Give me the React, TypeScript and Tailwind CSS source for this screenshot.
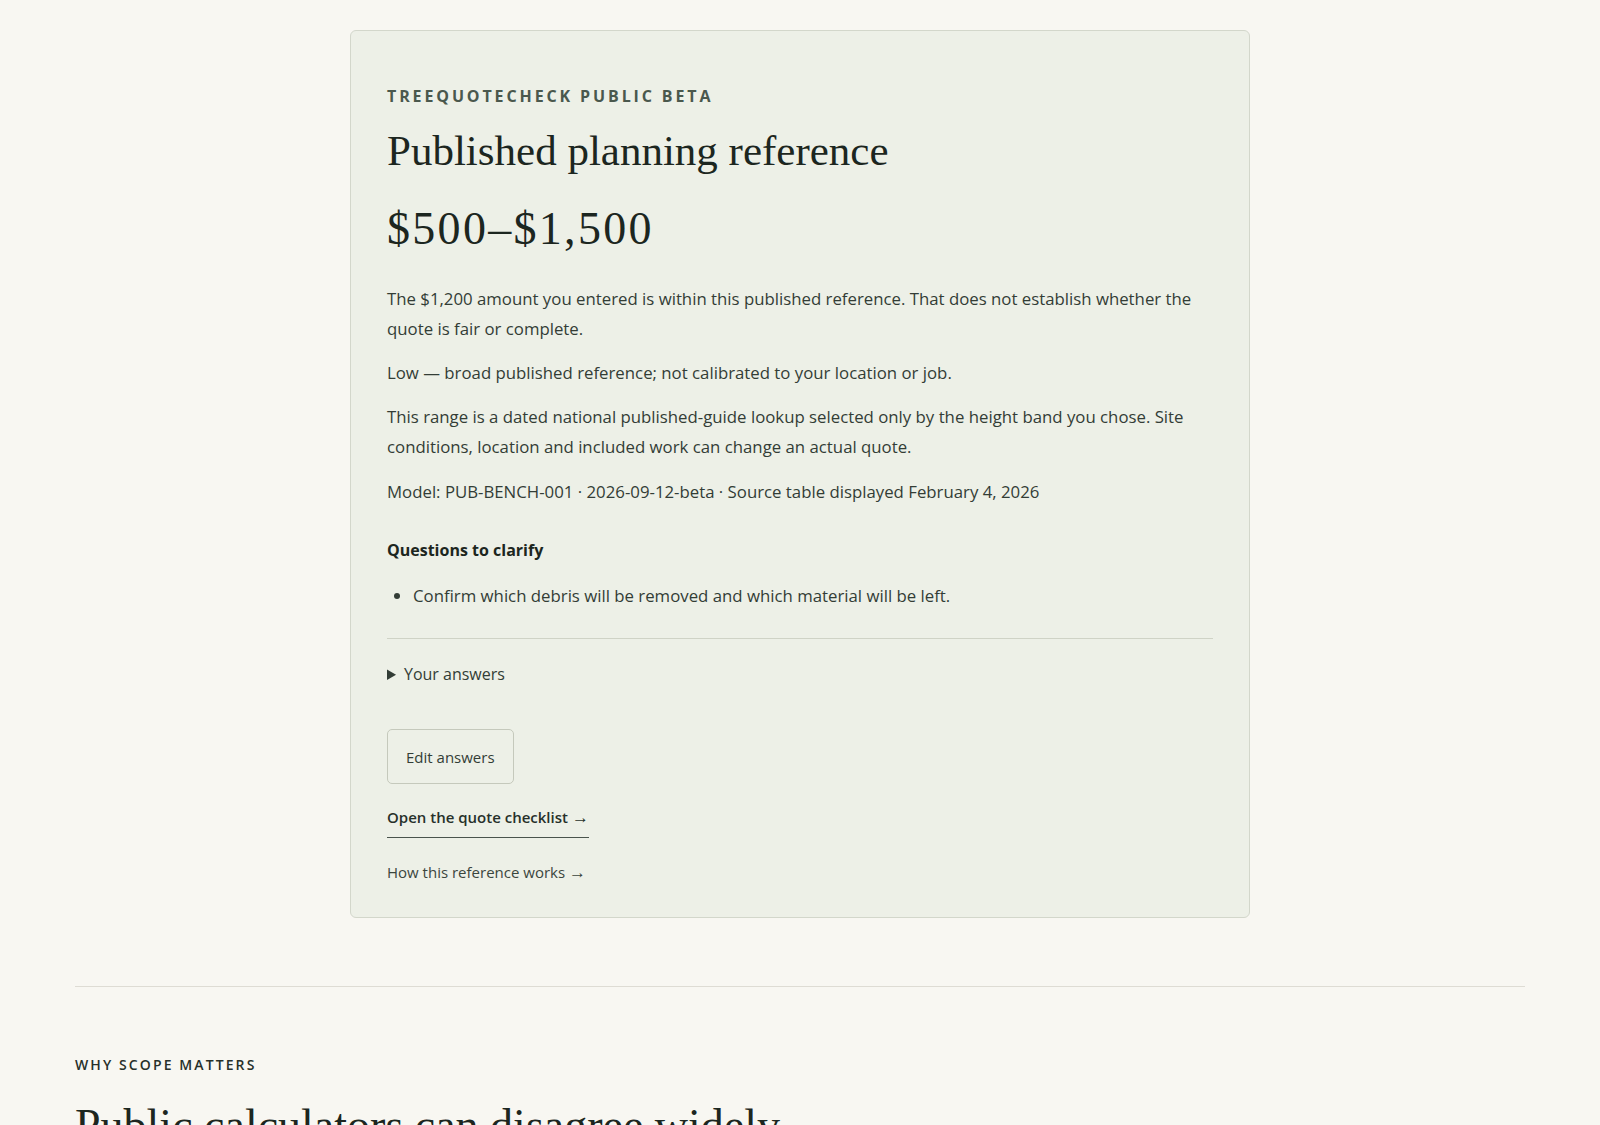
import React from 'react'

const sans = "font-['Open_Sans','Noto_Sans',sans-serif]"
const serif = "font-['Liberation_Serif','DejaVu_Serif',serif]"

function ResultCard() {
  return (
    <section className="mx-auto w-[900px] rounded-md border border-[#d3d7cb] bg-[#edf0e7] px-9 pt-[55px] pb-[30px] text-[#27302a]">
      <p className={`${sans} text-[16px] leading-5 font-bold uppercase tracking-[0.18em] text-[#4a584d]`}>
        TreeQuoteCheck public beta
      </p>
      <h1 className={`${serif} mt-[21px] text-[43px] leading-[48px] text-[#1c2620]`}>Published planning reference</h1>
      <p className={`${serif} mt-[25px] text-[46px] leading-[58px] tracking-[0.05em] text-[#1c2620]`}>$500–$1,500</p>

      <div className={`${sans} mt-[26px] text-[16.8px] leading-[30px] text-[#333d36]`}>
        <p>
          The $1,200 amount you entered is within this published reference. That does not establish whether the
          quote is fair or complete.
        </p>
        <p className="mt-[14px]">Low — broad published reference; not calibrated to your location or job.</p>
        <p className="mt-[14px]">
          This range is a dated national published-guide lookup selected only by the height band you chose. Site
          conditions, location and included work can change an actual quote.
        </p>
        <p className="mt-[15px]">Model: PUB-BENCH-001 · 2026-09-12-beta · Source table displayed February 4, 2026</p>

        <h2 className="mt-[31px] text-[16px] leading-6 font-bold text-[#1c2620]">Questions to clarify</h2>
        <ul className="mt-[19px] list-disc pl-[26px]">
          <li>Confirm which debris will be removed and which material will be left.</li>
        </ul>

        <hr className="mt-[27px] border-t border-[#cfd3c6]" />

        <details className="mt-[23px]">
          <summary className="cursor-pointer text-[16px] leading-6 text-[#333d36]">Your answers</summary>
        </details>

        <button className="mt-[43px] flex h-[55px] items-center rounded-[5px] border border-[#c5c9bc] px-[18px] text-[15px] text-[#333d36]">
          Edit answers
        </button>

        <div className="mt-[18px]">
          <a href="#" className="inline-block border-b border-[#4a544d] pb-[8px] text-[15px] leading-6 font-semibold text-[#27302a]">
            Open the quote checklist <span className="text-[17px]">→</span>
          </a>
        </div>
        <div className="mt-[19px]">
          <a href="#" className="text-[15px] leading-6 text-[#3b463e]">
            How this reference works <span className="text-[17px]">→</span>
          </a>
        </div>
      </div>
    </section>
  )
}

export default function App() {
  return (
    <div className="min-h-screen bg-[#f8f7f2] pt-[30px]">
      <ResultCard />
      <div className="mx-auto mt-[68px] w-[1450px] border-t border-[#dedcd4]" />
      <div className="mx-auto w-[1450px] pt-[68px]">
        <p className={`${sans} text-[14px] leading-5 font-semibold uppercase tracking-[0.15em] text-[#27302a]`}>
          Why scope matters
        </p>
        <h2 className={`${serif} mt-[23px] text-[46px] leading-[56px] text-[#1c2620]`}>
          Public calculators can disagree widely
        </h2>
      </div>
    </div>
  )
}
